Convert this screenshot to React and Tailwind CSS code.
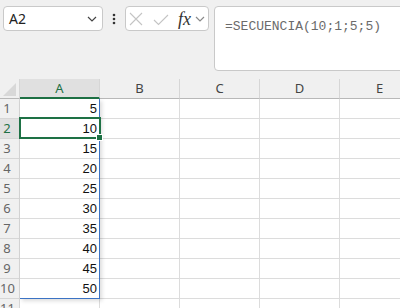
import React from 'react'

const COLS = ['A', 'B', 'C', 'D', 'E']
const ROWS = [1, 2, 3, 4, 5, 6, 7, 8, 9, 10, 11]
const GREEN = '#1e7145'

// values spilled by =SECUENCIA(10;1;5;5)
const valueFor = (row) => (row <= 10 ? row * 5 : null)

function Chevron({ color = '#444', w = 10 }) {
  return (
    <svg width={w} height="6" viewBox="0 0 10 6" fill="none">
      <path d="M1 1L5 5L9 1" stroke={color} strokeWidth="1.2" />
    </svg>
  )
}

function Toolbar() {
  return (
    <div className="flex h-[79px] items-start pt-[6px]">
      {/* Name box */}
      <div className="ml-[3px] flex h-[25px] w-[100px] shrink-0 items-center justify-between rounded-[4px] border border-[#c9c9c9] bg-white pl-[5px] pr-[5px]">
        <span className="text-[14px] leading-none text-[#222]">A2</span>
        <Chevron />
      </div>

      {/* vertical ellipsis */}
      <div className="flex h-[25px] w-[22px] shrink-0 items-center justify-center">
        <svg width="4" height="12" viewBox="0 0 4 12">
          <circle cx="2" cy="2" r="1.3" fill="#333" />
          <circle cx="2" cy="6" r="1.3" fill="#333" />
          <circle cx="2" cy="10" r="1.3" fill="#333" />
        </svg>
      </div>

      {/* cancel / enter / fx */}
      <div className="flex h-[25px] w-[84px] shrink-0 items-center rounded-[4px] border border-[#c9c9c9] bg-white">
        <svg className="ml-[3px]" width="14" height="14" viewBox="0 0 14 14" fill="none">
          <path d="M1 1L13 13M13 1L1 13" stroke="#c4c4c4" strokeWidth="1.1" />
        </svg>
        <svg className="ml-[10px] mt-[2px]" width="16" height="12" viewBox="0 0 16 12" fill="none">
          <path d="M1 6L5.5 10.5L15 1" stroke="#c4c4c4" strokeWidth="1.1" />
        </svg>
        <span className="ml-[9px] font-['Liberation_Serif',serif] text-[18px] italic leading-none text-[#333]">fx</span>
        <span className="ml-[4px] mt-[1px]">
          <Chevron color="#8a8a8a" />
        </span>
      </div>

      {/* formula bar */}
      <div className="ml-[5px] h-[65px] w-[200px] shrink-0 rounded-[4px] border border-[#c9c9c9] bg-white pl-[10px] pt-[5px]">
        <span className="whitespace-nowrap font-['Liberation_Mono',monospace] text-[13px] leading-[16px] text-[#6b6b6b]">
          =SECUENCIA(10;1;5;5)
        </span>
      </div>
    </div>
  )
}

function HeaderRow() {
  return (
    <div className="flex h-[20px]">
      <div className="relative h-[20px] w-[20px] shrink-0 border-b border-r border-b-[#b8b8b8] border-r-[#d6d6d6]">
        <svg className="absolute left-0 top-0" width="20" height="20" viewBox="0 0 20 20">
          <polygon points="16,4 16,17 3,17" fill="#d8d8d8" />
        </svg>
      </div>
      {COLS.map((c) => {
        const sel = c === 'A'
        return (
          <div
            key={c}
            className={
              sel
                ? 'h-[20px] w-[80px] shrink-0 border-b-2 border-r border-b-[#1e7145] border-r-[#d6d6d6] bg-[#e0e0e0] text-center text-[13px] leading-[19px] text-[#1e7145]'
                : 'h-[20px] w-[80px] shrink-0 border-b border-r border-b-[#b8b8b8] border-r-[#d6d6d6] text-center text-[13px] leading-[19px] text-[#444]'
            }
          >
            {c}
          </div>
        )
      })}
    </div>
  )
}

function GridRow({ row }) {
  const sel = row === 2
  const v = valueFor(row)
  return (
    <div className="flex h-[20px]">
      <div
        className={
          sel
            ? 'h-[20px] w-[20px] shrink-0 border-b border-r border-[#d6d6d6] bg-[#e0e0e0] text-[13px] leading-[19px] text-[#1e7145]'
            : 'h-[20px] w-[20px] shrink-0 border-b border-r border-[#d6d6d6] text-[13px] leading-[19px] text-[#666]'
        }
      >
        <span className="block w-[14px] text-center">{row}</span>
      </div>
      {COLS.map((c) => (
        <div
          key={c}
          className="h-[20px] w-[80px] shrink-0 border-b border-r border-[#dcdcdc] bg-white pr-[2px] text-right font-['Liberation_Sans',Arial,sans-serif] text-[13px] leading-[20px] text-[#111]"
        >
          {c === 'A' && v !== null ? v : ''}
        </div>
      ))}
    </div>
  )
}

export default function App() {
  return (
    <div className="relative h-[308px] w-[400px] overflow-hidden bg-[#f0f0f0] font-['Noto_Sans',sans-serif]">
      <Toolbar />

      <div className="w-max">
        <HeaderRow />
        {ROWS.map((r) => (
          <GridRow key={r} row={r} />
        ))}
      </div>

      {/* spill range outline */}
      <div className="absolute left-[20px] top-[99px] h-[200px] w-[80px] border-b border-r border-[#3b73c4] shadow-[2px_2px_4px_rgba(0,0,0,0.14)]" />

      {/* active cell A2 */}
      <div className="absolute left-[19px] top-[117px] h-[22px] w-[82px] border-2 border-[#1e7145]" />
      <div className="absolute left-[96px] top-[134px] h-[7px] w-[7px] border border-white bg-[#1e7145]" />
    </div>
  )
}
